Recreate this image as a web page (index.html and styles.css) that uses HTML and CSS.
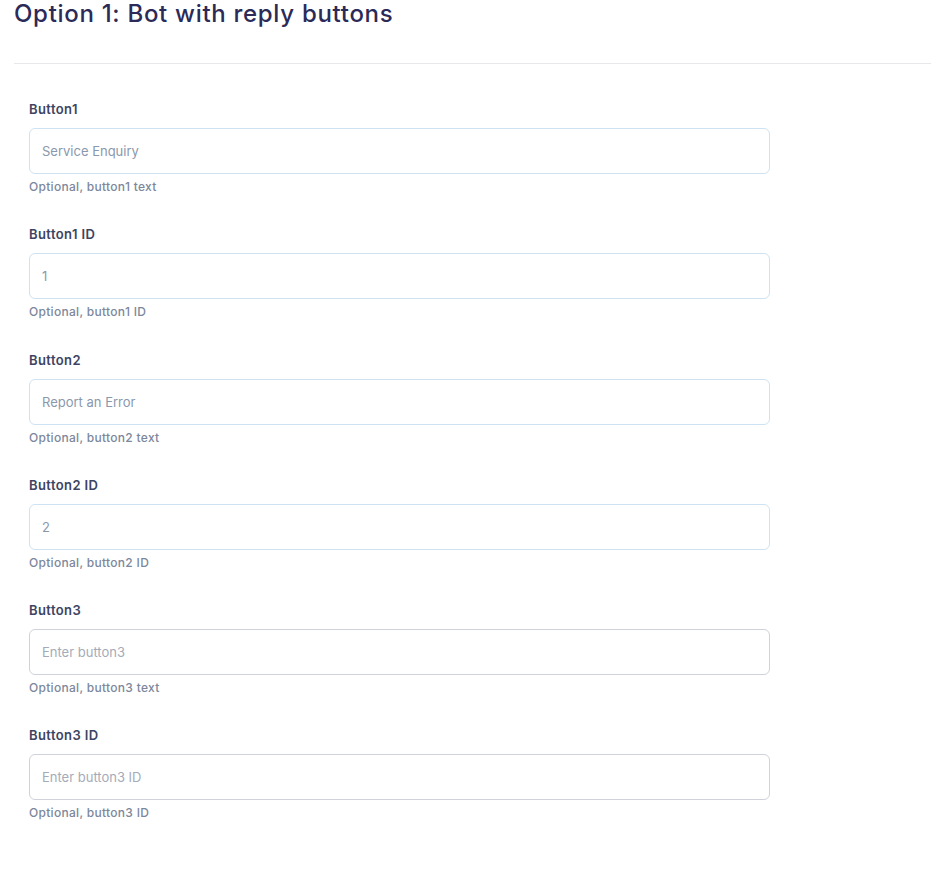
FILE: index.html
```html
<!DOCTYPE html>
<html lang="en">
<head>
<meta charset="utf-8">
<title>Option 1: Bot with reply buttons</title>
<link rel="stylesheet" href="styles.css">
</head>
<body>
<div class="panel">
  <h2 class="title">Option 1: Bot with reply buttons</h2>
  <hr class="divider">
  <form class="form">
    <div class="field">
      <label class="label" for="b1">Button1</label>
      <input class="input filled" id="b1" type="text" value="Service Enquiry">
      <div class="help">Optional, button1 text</div>
    </div>
    <div class="field">
      <label class="label" for="b1id">Button1 ID</label>
      <input class="input filled" id="b1id" type="text" value="1">
      <div class="help">Optional, button1 ID</div>
    </div>
    <div class="field">
      <label class="label" for="b2">Button2</label>
      <input class="input filled" id="b2" type="text" value="Report an Error">
      <div class="help">Optional, button2 text</div>
    </div>
    <div class="field">
      <label class="label" for="b2id">Button2 ID</label>
      <input class="input filled" id="b2id" type="text" value="2">
      <div class="help">Optional, button2 ID</div>
    </div>
    <div class="field">
      <label class="label" for="b3">Button3</label>
      <input class="input" id="b3" type="text" placeholder="Enter button3">
      <div class="help">Optional, button3 text</div>
    </div>
    <div class="field">
      <label class="label" for="b3id">Button3 ID</label>
      <input class="input" id="b3id" type="text" placeholder="Enter button3 ID">
      <div class="help">Optional, button3 ID</div>
    </div>
  </form>
</div>
</body>
</html>
```
FILE: styles.css
```css
* { box-sizing: border-box; }
html, body { margin: 0; padding: 0; background: #ffffff; }
body {
  font-family: "Inter", "Lato", "Liberation Sans", sans-serif;
  color: #3b4262;
}
.panel {
  padding-left: 14px;
}
.title {
  margin: 0;
  padding-top: 0;
  font-size: 24px;
  line-height: 27px;
  font-weight: 500;
  color: #2b2a58;
  letter-spacing: 0.7px;
}
.divider {
  margin: 36px 0 0 0;
  border: 0;
  border-top: 1px solid #e6e8ec;
  height: 0;
}
.form {
  padding: 37px 0 0 15px;
  display: flex;
  flex-direction: column;
  gap: 32.3px;
}
.field {
  display: flex;
  flex-direction: column;
  width: 741px;
}
.label {
  font-size: 13px;
  line-height: 16px;
  font-weight: 600;
  color: #3d4461;
  letter-spacing: 0.4px;
  margin-bottom: 11px;
}
.input {
  height: 46px;
  width: 741px;
  border: 1px solid #cfd2da;
  border-radius: 6px;
  padding: 0 12px;
  font-family: inherit;
  font-size: 13px;
  color: #8a98ad;
  outline: none;
  background: #fff;
}
.input.filled {
  border-color: #cde3f4;
}
.input::placeholder {
  color: #a4abb8;
}
.help {
  margin-top: 5px;
  font-size: 12px;
  line-height: 15px;
  font-weight: 500;
  color: #7c879b;
  letter-spacing: 0.3px;
}
```
